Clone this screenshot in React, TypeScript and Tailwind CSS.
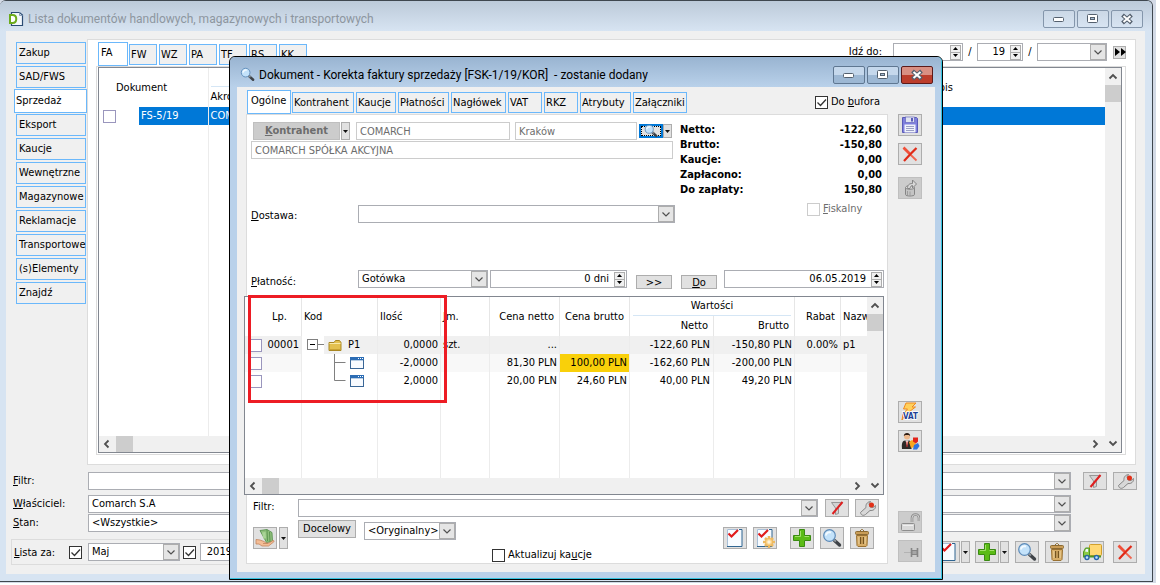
import type { ReactNode } from 'react';
import { useId } from 'react';

interface ChildrenProps {
  children: ReactNode;
}

interface IconButtonProps extends ChildrenProps {
  label: string;
  disabled?: boolean;
  short?: boolean;
}

interface SelectBoxProps {
  id?: string;
  label?: string;
  value?: string;
  className: string;
}

interface CheckBoxProps {
  id?: string;
  label?: string;
  checked?: boolean;
  tone?: 'dark' | 'muted' | 'violet';
  disabled?: boolean;
}

interface LineItem {
  lp?: string;
  quantity: string;
  unit?: string;
  netPrice: string;
  grossPrice?: string;
  net: string;
  gross: string;
  discount?: string;
  name?: string;
}

const documentGroups = [
  'Zakup',
  'SAD/FWS',
  'Sprzedaż',
  'Eksport',
  'Kaucje',
  'Wewnętrzne',
  'Magazynowe',
  'Reklamacje',
  'Transportowe',
  '(s)Elementy',
  'Znajdź',
];

const listTabs = ['FW', 'WZ', 'PA', 'TF', 'RS', 'KK'];

const documentTabs = [
  { name: 'Kontrahent', width: 'w-[62px]' },
  { name: 'Kaucje', width: 'w-[40px]' },
  { name: 'Płatności', width: 'w-[51px]' },
  { name: 'Nagłówek', width: 'w-[55px]' },
  { name: 'VAT', width: 'w-[34px]' },
  { name: 'RKZ', width: 'w-[34px]' },
  { name: 'Atrybuty', width: 'w-[51px]' },
  { name: 'Załączniki', width: 'w-[54px]' },
];

const totals = [
  ['Netto:', '-122,60'],
  ['Brutto:', '-150,80'],
  ['Kaucje:', '0,00'],
  ['Zapłacono:', '0,00'],
  ['Do zapłaty:', '150,80'],
];

const items: LineItem[] = [
  {
    lp: '00001',
    quantity: '0,0000',
    unit: 'szt.',
    netPrice: '...',
    net: '-122,60 PLN',
    gross: '-150,80 PLN',
    discount: '0.00%',
    name: 'p1',
  },
  {
    quantity: '-2,0000',
    netPrice: '81,30 PLN',
    grossPrice: '100,00 PLN',
    net: '-162,60 PLN',
    gross: '-200,00 PLN',
  },
  {
    quantity: '2,0000',
    netPrice: '20,00 PLN',
    grossPrice: '24,60 PLN',
    net: '40,00 PLN',
    gross: '49,20 PLN',
  },
];

/* ---------- icons ---------- */

function SearchIcon({ className = 'size-[20px]' }: { className?: string }) {
  return (
    <svg viewBox="0 0 20 20" className={className} aria-hidden="true">
      <path d="M12.5 12.5l5 4.500" stroke="#3f4348" strokeWidth="3.4" strokeLinecap="round" />
      <path d="M11.5 11.5l2.5 2" stroke="#8d949b" strokeWidth="2" />
      <circle cx="7.5" cy="7.5" r="5.8" fill="#c3e2fa" stroke="#5c8ab8" strokeWidth="1.2" />
      <path d="M4 7.500a3.5 3.5 0 0 1 5-3" stroke="#f3faff" strokeWidth="2" fill="none" />
    </svg>
  );
}

function PlusIcon() {
  return (
    <svg viewBox="0 0 20 20" className="size-[20px]" aria-hidden="true">
      <path d="M7.5 1.5h5v6h6v5h-6v6h-5v-6h-6v-5h6z" fill="#5bbb16" stroke="#3a8a12" />
      <path d="M8.500 3v5.500H3M12.500 8.500H17" stroke="#a3e06a" fill="none" />
    </svg>
  );
}

function TrashIcon() {
  return (
    <svg viewBox="0 0 20 20" className="size-[20px]" aria-hidden="true">
      <path d="M7.5 3.5l2-2h1l2 2" fill="none" stroke="#8b6a33" />
      <path d="M4.5 7.5h11l-.5 10-1 1H6l-1-1z" fill="#d8ae68" stroke="#9a7233" />
      <rect x="3.5" y="3.5" width="13" height="3" rx="1" fill="#c99d57" stroke="#8b6a33" />
      <path d="M8.5 9v7M11.5 9v7" stroke="#75541f" strokeWidth="1.5" />
      <path d="M7 9v7M13 9v7" stroke="#f0d7a4" />
    </svg>
  );
}

function CheckDocIcon({ gear = false }: { gear?: boolean }) {
  return (
    <svg viewBox="0 0 20 20" className="size-[20px]" aria-hidden="true">
      <path d="M2 1h15v18H2z" fill="#f7fbff" />
      <path d="M2.5 19V1.5H13" stroke="#a9bfd6" fill="none" />
      <path d="M14 1.5h3V18.500H2" stroke="#2f6591" fill="none" />
      <path d="M3.5 5.5l3 3L13 2" stroke="#e01b1b" strokeWidth="2.2" fill="none" />
      {gear && (
        <g>
          <path d="M14 8v12M8 14h12M10 10l8 8M18 10l-8 8" stroke="#eeb95f" strokeWidth="2.6" />
          <circle cx="14" cy="14" r="3.6" fill="#fbd58c" stroke="#eeb95f" />
          <circle cx="14" cy="14" r="1.7" fill="#fff4dc" />
        </g>
      )}
    </svg>
  );
}

function FilterIcon() {
  return (
    <svg viewBox="0 0 20 16" className="h-[16px] w-[20px] shrink-0" aria-hidden="true">
      <path d="M4.5 2.5h11l-4 5v6l-3 1V8z" fill="#d2d2d2" stroke="#979797" />
      <path d="M5.500 14L15.500 2" stroke="#df1f1f" strokeWidth="2" />
    </svg>
  );
}

function WrenchIcon() {
  return (
    <svg viewBox="0 0 20 16" className="h-[16px] w-[20px] shrink-0" aria-hidden="true">
      <path
        d="M3.500 12.500l5.500-5c-.5-3 1-5.500 4.500-6l-1.500 2.500 1 3 3 .5 2.500-2c.5 3.500-2.500 5.500-5.500 5l-4.500 4c-2 1.500-4.500 1-5-2z"
        fill="#d8d8d8"
        stroke="#858585"
      />
      <circle cx="14.500" cy="5" r="2.500" fill="#e23018" />
    </svg>
  );
}

function DeleteIcon() {
  return (
    <svg viewBox="0 0 20 20" className="size-[20px]" aria-hidden="true">
      <path d="M4 4.5l12.500 12" stroke="#f0654f" strokeWidth="1.8" />
      <path d="M3.5 3.5l6 6" stroke="#f0503a" strokeWidth="2.6" />
      <path d="M16.5 4L10 10.5 4 17" stroke="#e02a17" strokeWidth="2.2" fill="none" />
    </svg>
  );
}

function TruckIcon() {
  return (
    <svg viewBox="0 0 20 20" className="size-[20px]" aria-hidden="true">
      <rect x="7.5" y="2.5" width="12" height="11" rx="1" fill="#ffd873" stroke="#d19f2c" />
      <path d="M1.5 14.5V10l2-4h4v8.500z" fill="#8acb45" stroke="#4f9422" />
      <path d="M3 9.5l1-2.500h2v3z" fill="#eaf6ff" />
      <path d="M1 14.5h18" stroke="#4f9422" strokeWidth="2" />
      <circle cx="5" cy="15.5" r="2" fill="#bfe3ff" stroke="#2765a8" strokeWidth="1.4" />
      <circle cx="14.5" cy="15.5" r="2" fill="#bfe3ff" stroke="#2765a8" strokeWidth="1.4" />
    </svg>
  );
}

function SaveIcon() {
  return (
    <svg viewBox="0 0 20 20" className="size-[20px]" aria-hidden="true">
      <path d="M2.5 2.5h14l1 1v14h-15z" fill="#7f80dd" stroke="#5a5bb8" />
      <rect x="5.5" y="2" width="9" height="5.5" fill="#dfe3f0" stroke="#5a5bb8" strokeWidth=".6" />
      <rect x="11" y="3" width="2" height="3.5" fill="#5a5bb8" />
      <rect x="4.5" y="9.5" width="11" height="8" fill="#f1f3fb" />
      <path d="M6 11.5h8M6 13.5h8M6 15.5h8" stroke="#9a9fc4" />
    </svg>
  );
}

function CanIcon() {
  return (
    <svg viewBox="0 0 20 20" className="size-[20px]" aria-hidden="true">
      <path d="M5.5 9.5v7c0 2 9 2 9 0v-7" fill="#c4c4c4" stroke="#858585" />
      <ellipse cx="10" cy="9.5" rx="4.5" ry="1.8" fill="#dadada" stroke="#858585" />
      <path
        d="M7.500 10.5c0-3 1-5 5-5v-3.500l4 4-4 4V7.500c-1.500 0-2 1-2.500 3z"
        fill="#d8d8d8"
        stroke="#858585"
      />
      <path d="M7.500 13v4M10 13.500v4" stroke="#9c9c9c" />
    </svg>
  );
}

function VatIcon() {
  return (
    <svg viewBox="0 0 22 20" className="h-[20px] w-[22px] shrink-0" aria-hidden="true">
      <path d="M7 1h10l-4 4h3.500L6 13l-3 5 1-6 4.500-5H4.500z" fill="#ffd05c" stroke="#f08a1c" />
      <text
        x="4"
        y="17"
        fontSize="8"
        fontWeight="700"
        fontFamily="DejaVu Sans Condensed, sans-serif"
        fill="#1e3f95"
        stroke="#fff"
        strokeWidth="1.5"
        paintOrder="stroke"
      >
        VAT
      </text>
    </svg>
  );
}

function CustomerIcon() {
  return (
    <svg viewBox="0 0 20 20" className="size-[20px]" aria-hidden="true">
      <path d="M2 18c-.5-5 0-8 3-8.500h4c2.500.5 3 4 2.500 8.500z" fill="#2d2a28" />
      <path d="M5.5 9.5L7 15l1.500-5.500z" fill="#f5f5f5" />
      <path d="M7 10.5V16" stroke="#d22" />
      <circle cx="7" cy="5.5" r="3" fill="#eeb98d" />
      <path d="M3.8 5c0-4 6.400-4 6.400 0l-1.500-1H5.500z" fill="#2b1a12" />
      <path d="M9 11l3-2 4 2-1 5-4 1z" fill="#f9a61f" />
      <path d="M13 6.5h5v4l-2 2-3-2z" fill="#e2231a" />
      <path d="M14 14l4-2 1.500 3-2.500 3.500h-4z" fill="#2f73dd" />
    </svg>
  );
}

function LockIcon() {
  return (
    <svg viewBox="0 0 20 20" className="size-[20px]" aria-hidden="true">
      <path d="M12 10V6a3.500 3.500 0 0 1 7 0v3" stroke="#8d8d8d" strokeWidth="2.6" fill="none" />
      <path d="M12 10V6a3.500 3.500 0 0 1 7 0v3" stroke="#d0d0d0" fill="none" />
      <rect x="1.5" y="11.5" width="13" height="7" rx="1" fill="#d9d9d9" stroke="#8d8d8d" />
      <path d="M3 13.5h10" stroke="#efefef" />
    </svg>
  );
}

function PinIcon() {
  return (
    <svg viewBox="0 0 20 20" className="size-[20px]" aria-hidden="true">
      <path d="M4 11.5h7" stroke="#b3b3b3" />
      <path d="M11.5 7v9M17.500 7v9" stroke="#858585" strokeWidth="1.600" />
      <path d="M12 9.500h5v4h-5z" fill="#a6a6a6" stroke="#858585" />
    </svg>
  );
}

function MoneyIcon() {
  return (
    <svg viewBox="0 0 20 20" className="size-[20px]" aria-hidden="true">
      <path d="M5 2.5l7-1 5 3 .5 9-6 1z" fill="#8fbf7b" stroke="#4f8a46" strokeWidth=".8" />
      <path d="M12 2l.5 11M14.5 4l.5 9.500" stroke="#4f8a46" strokeWidth=".8" />
      <path d="M7 4.5l3.500-.5.5 6-2.500 1z" fill="#aad497" />
      <path
        d="M1 11.5l4 .5 4 1.500 2 1.500h3l4-2.500c1.500 0 1.500 1 0 2L13.500 18H7l-3-2H1z"
        fill="#f4bd96"
        stroke="#c3855d"
        strokeWidth=".8"
      />
      <path d="M8 15.5h5" stroke="#c3855d" strokeWidth=".8" />
    </svg>
  );
}

function AppIcon() {
  return (
    <svg viewBox="0 0 16 16" className="size-[16px]" aria-hidden="true">
      <path d="M3.500 3.500v-2h8L14.500 4v10.500h-11v-2" fill="#f4f8fc" stroke="#2c4c74" strokeWidth="1.2" />
      <path d="M11.500 1.500V4.500h3" stroke="#8aa0bb" fill="none" />
      <path d="M2 4h2.500c5 0 5 8 0 8H2z" fill="#fff" stroke="#6cab1c" strokeWidth="2" />
    </svg>
  );
}

function FolderIcon() {
  return (
    <svg viewBox="0 0 14 13" className="h-[13px] w-[14px]" aria-hidden="true">
      <path d="M1 3.5h5l1.500-2h4l1.500 2v8H1z" fill="#e3c04e" stroke="#a98722" />
      <path d="M1.5 4.5h11" stroke="#f8e9a8" />
      <path d="M1.5 10.5h11" stroke="#c9a232" />
    </svg>
  );
}

function VariantIcon() {
  return (
    <svg viewBox="0 0 14 12" className="h-[12px] w-[14px]" aria-hidden="true">
      <rect x=".5" y=".5" width="13" height="11" fill="#f8fbff" stroke="#3a6797" />
      <path d="M0 0h14v3H0z" fill="#2c6db5" />
      <path d="M8 1.5h1M10 1.5h1M12 1.5h1" stroke="#fff" />
      <path d="M1 3.500h12" stroke="#b7cde4" />
    </svg>
  );
}

function Chevron({
  direction = 'down',
  thin = false,
}: {
  direction?: 'up' | 'down' | 'left' | 'right';
  thin?: boolean;
}) {
  const paths = {
    up: 'M1.5 6.5L5 3l3.500 3.500',
    down: 'M1.5 3.500L5 7l3.500-3.500',
    left: 'M6.5 1.5L3 5l3.500 3.500',
    right: 'M3.5 1.5L7 5 3.500 8.500',
  };

  return (
    <svg viewBox="0 0 10 10" className="size-[10px] shrink-0" aria-hidden="true">
      <path d={paths[direction]} stroke="#505050" strokeWidth={thin ? 1.2 : 1.8} fill="none" />
    </svg>
  );
}

/* ---------- controls ---------- */

function IconButton({ label, disabled = false, short = false, children }: IconButtonProps) {
  return (
    <button
      type="button"
      aria-label={label}
      disabled={disabled}
      className={`flex w-[24px] shrink-0 items-center justify-center border ${
        short ? 'h-[18px]' : 'h-[22px]'
      } ${disabled ? 'border-[#bfbfbf] bg-[#cccccc]' : 'border-[#adadad] bg-[#e1e1e1]'}`}
    >
      {children}
    </button>
  );
}

function DropButton({ label, className = 'h-[22px]' }: { label: string; className?: string }) {
  return (
    <button
      type="button"
      aria-label={label}
      className={`flex w-[9px] shrink-0 items-center justify-center border border-[#adadad] bg-[#e1e1e1] ${className}`}
    >
      <svg viewBox="0 0 5 3" className="h-[3px] w-[5px] shrink-0" aria-hidden="true">
        <path d="M0 0h5L2.5 3z" fill="#111" />
      </svg>
    </button>
  );
}

function SelectBox({ id, label, value = '', className }: SelectBoxProps) {
  return (
    <div className={`flex h-[18px] border border-[#abadb3] bg-white ${className}`}>
      <select
        id={id}
        aria-label={label}
        defaultValue={value}
        className="min-w-0 flex-1 appearance-none bg-transparent pl-[3px] outline-none"
      >
        <option value={value}>{value}</option>
      </select>
      <span className="pointer-events-none flex w-[16px] items-center justify-center border border-[#adadad] bg-[#e5e5e5]">
        <Chevron thin />
      </span>
    </div>
  );
}

function SpinBox({ id, label, value = '', className }: SelectBoxProps) {
  return (
    <div className={`flex h-[18px] items-center border border-[#abadb3] bg-white pr-px ${className}`}>
      <input
        id={id}
        type="text"
        aria-label={label}
        defaultValue={value}
        className="min-w-0 flex-1 bg-transparent pr-[5px] text-right outline-none"
      />
      <span className="flex h-[15px] w-[11px] flex-col border border-[#adadad] bg-[#f0f0f0]">
        <button type="button" aria-label="Zwiększ" className="flex flex-1 items-center justify-center">
          <svg viewBox="0 0 5 3" className="h-[3px] w-[5px] shrink-0" aria-hidden="true">
            <path d="M0 3h5L2.5 0z" fill="#000" />
          </svg>
        </button>
        <button
          type="button"
          aria-label="Zmniejsz"
          className="flex flex-1 items-center justify-center border-t border-[#adadad]"
        >
          <svg viewBox="0 0 5 3" className="h-[3px] w-[5px] shrink-0" aria-hidden="true">
            <path d="M0 0h5L2.5 3z" fill="#000" />
          </svg>
        </button>
      </span>
    </div>
  );
}

function CheckBox({ id, label, checked = false, tone = 'dark', disabled = false }: CheckBoxProps) {
  const border = {
    dark: 'border-[#333333]',
    muted: 'border-[#cccccc]',
    violet: 'border-[#9a96bd]',
  };

  return (
    <span className="grid size-[13px] shrink-0">
      <input
        id={id}
        type="checkbox"
        aria-label={label}
        defaultChecked={checked}
        disabled={disabled}
        className={`peer col-start-1 row-start-1 size-[13px] appearance-none border bg-white ${border[tone]}`}
      />
      <svg
        viewBox="0 0 13 13"
        className="pointer-events-none invisible col-start-1 row-start-1 size-[13px] peer-checked:visible"
        aria-hidden="true"
      >
        <path d="M2.5 6.5l3 3L11 3.5" stroke="#333" strokeWidth="1.3" fill="none" />
      </svg>
    </span>
  );
}

function WindowButtons({ active = false }: { active?: boolean }) {
  const base = 'flex h-[18px] w-[32px] items-center justify-center rounded-[2px] border';
  const plain = active
    ? 'border-[#5f7791] bg-linear-to-b from-[#c5d8ec] from-50% to-[#9db8d4] to-50%'
    : 'border-[#8496ab] bg-linear-to-b from-[#cbd8e6] to-[#d7e4f2]';
  const close = active
    ? 'border-[#5c1a1a] bg-linear-to-b from-[#d98f83] from-50% to-[#bc3d2c] to-50%'
    : plain;

  return (
    <div className="flex gap-[2px]">
      <button type="button" aria-label="Minimalizuj" className={`${base} ${plain}`}>
        <svg viewBox="0 0 12 12" className="size-[12px]" aria-hidden="true">
          <rect x=".5" y="4.5" width="10" height="4" rx="1" fill="#fff" stroke="#54606e" />
        </svg>
      </button>
      <button type="button" aria-label="Maksymalizuj" className={`${base} ${plain}`}>
        <svg viewBox="0 0 12 12" className="size-[12px]" aria-hidden="true">
          <rect x=".5" y="1.5" width="10" height="8" rx="1" fill="#fff" stroke="#54606e" />
          <rect x="3.5" y="4.5" width="4" height="2" fill="#a8bdd4" stroke="#54606e" />
        </svg>
      </button>
      <button type="button" aria-label="Zamknij" className={`${base} ${close}`}>
        <svg viewBox="0 0 12 12" className="size-[12px]" aria-hidden="true">
          <path d="M1.500 2l9 8M10.500 2l-9 8" stroke="#54606e" strokeWidth="4" />
          <path d="M2.500 3l7 6M9.500 3l-7 6" stroke="#fff" strokeWidth="2" />
        </svg>
      </button>
    </div>
  );
}

function Tab({ children, width }: ChildrenProps & { width: string }) {
  return (
    <button
      type="button"
      role="tab"
      aria-selected={false}
      className={`h-[21px] overflow-hidden border border-[#6bb8fb] bg-[#f0f0f0] pl-px text-left whitespace-nowrap ${width}`}
    >
      {children}
    </button>
  );
}

function HorizontalScroll() {
  return (
    <div className="flex h-[16px] items-center bg-[#f0f0f0] pr-[5px] pl-[3px]">
      <Chevron direction="left" />
      <span className="ml-[4px] h-full w-[17px] bg-[#cdcdcd]" />
      <span className="flex-1" />
      <Chevron direction="right" />
    </div>
  );
}

function VerticalScroll() {
  return (
    <div className="flex w-[16px] shrink-0 flex-col items-center bg-[#f0f0f0] pt-[4px] pb-[4px]">
      <Chevron direction="up" />
      <span className="mt-[3px] h-[17px] w-full bg-[#cdcdcd]" />
      <span className="flex-1" />
      <Chevron />
    </div>
  );
}

/* ---------- document list ---------- */

function DocumentList() {
  return (
    <div className="ml-[8px] flex flex-1 flex-col border border-[#dcdcdc] pr-[3px] pb-px pl-px">
      <div className="flex flex-1 border border-[#828790] bg-white">
        <div className="flex min-w-0 flex-1 flex-col">
          <div className="flex flex-1">
            <table className="w-full flex-1 table-fixed border-collapse text-left">
              <colgroup>
                <col className="w-[40px]" />
                <col className="w-[69px]" />
                <col className="w-[723px]" />
                <col />
              </colgroup>
              <thead>
                <tr className="h-[39px]">
                  <th colSpan={2} className="border-r border-[#ececec] pl-[17px] font-normal">
                    Dokument
                  </th>
                  <th className="p-0 align-bottom font-normal">
                    <div className="ml-[2px] border-t border-[#d5e6f5] pt-[3px] pb-[3px]">Akronim</div>
                  </th>
                  <th className="pl-0 font-normal">Opis</th>
                </tr>
              </thead>
              <tbody>
                <tr className="h-[18px]">
                  <td className="p-0 pl-[4px]">
                    <CheckBox tone="violet" label="Zaznacz FS-5/19" />
                  </td>
                  <td className="border-r border-[#ececec] bg-[#0078d7] p-0 pl-[2px] text-white">FS-5/19</td>
                  <td className="bg-[#0078d7] p-0 pl-[2px] text-white">COMARCH</td>
                  <td className="bg-[#0078d7] p-0" />
                </tr>
                <tr>
                  <td colSpan={2} className="h-full border-r border-[#ececec]" />
                  <td colSpan={2} />
                </tr>
              </tbody>
            </table>
          </div>
          <HorizontalScroll />
        </div>
        <VerticalScroll />
      </div>
    </div>
  );
}

function ListFooter() {
  const filterId = useId();
  const ownerId = useId();
  const stateId = useId();
  const monthId = useId();

  return (
    <div className="mt-[7px] pr-[8px] pl-[5px]">
      <div className="mb-[5px] flex items-center">
        <label htmlFor={filterId} className="w-[77px] pl-[2px]">
          <u>F</u>iltr:
        </label>
        <SelectBox id={filterId} className="flex-1" />
        <div className="ml-[12px] flex gap-[6px]">
          <IconButton label="Wyczyść filtr" short>
            <FilterIcon />
          </IconButton>
          <IconButton label="Konstruktor filtra" short>
            <WrenchIcon />
          </IconButton>
        </div>
      </div>
      <div className="mb-px flex items-center pr-[66px]">
        <label htmlFor={ownerId} className="w-[77px] pl-[2px]">
          <u>W</u>łaściciel:
        </label>
        <SelectBox id={ownerId} value="Comarch S.A" className="flex-1" />
      </div>
      <div className="flex items-center pr-[66px]">
        <label htmlFor={stateId} className="w-[77px] pl-[2px]">
          <u>S</u>tan:
        </label>
        <SelectBox id={stateId} value="<Wszystkie>" className="flex-1" />
      </div>

      <div className="mt-[7px] mb-[9px] flex items-center justify-between">
        <div className="flex h-[26px] w-[300px] items-center border border-[#dcdcdc]">
          <label htmlFor={monthId} className="w-[57px] pt-px pl-[2px]">
            <u>L</u>ista za:
          </label>
          <CheckBox checked label="Filtruj po miesiącu" />
          <SelectBox id={monthId} value="Maj" className="mr-[3px] ml-[6px] w-[92px]" />
          <CheckBox checked label="Filtruj po roku" />
          <SpinBox label="Rok" value="2019" className="ml-[4px] w-[50px]" />
        </div>
        <div className="flex items-center">
          <IconButton label="Podgląd statusu">
            <CheckDocIcon />
          </IconButton>
          <span className="mr-[5px] ml-px flex">
            <DropButton label="Więcej statusów" />
          </span>
          <IconButton label="Dodaj">
            <PlusIcon />
          </IconButton>
          <span className="mr-[6px] ml-px flex">
            <DropButton label="Więcej opcji dodawania" />
          </span>
          <div className="flex gap-[6px]">
            <IconButton label="Pokaż">
              <SearchIcon />
            </IconButton>
            <IconButton label="Usuń">
              <TrashIcon />
            </IconButton>
          </div>
          <div className="ml-[11px] flex gap-[9px]">
            <IconButton label="Transport">
              <TruckIcon />
            </IconButton>
            <IconButton label="Zamknij listę">
              <DeleteIcon />
            </IconButton>
          </div>
        </div>
      </div>
    </div>
  );
}

/* ---------- correction document ---------- */

function TreeCell({ index }: { index: number }) {
  if (index === 0) {
    return (
      <div className="flex h-[18px] items-center">
        <svg viewBox="0 0 22 18" className="h-[18px] w-[22px] shrink-0" aria-hidden="true">
          <rect x="5.5" y="3.5" width="10" height="10" fill="#fff" stroke="#808080" />
          <path d="M8 8.5h5" stroke="#000" />
          <path d="M16 8.5h6" stroke="#808080" />
        </svg>
        <div className="flex h-[18px] flex-1 items-center gap-[6px] bg-[#f0f0f0] pl-[4px]">
          <FolderIcon />
          P1
        </div>
      </div>
    );
  }

  return (
    <div className="flex h-[18px] items-center bg-white">
      <svg viewBox="0 0 48 18" className="h-[18px] w-[48px] shrink-0" aria-hidden="true">
        <path d={index === 1 ? 'M32.5 0v18M32.5 8.5h11' : 'M32.5 0v8.5h11'} stroke="#808080" fill="none" />
      </svg>
      <VariantIcon />
    </div>
  );
}

function ItemsTable() {
  const head = 'overflow-hidden border-r border-[#e6e6e6] p-0 font-normal whitespace-nowrap';
  const cell = 'overflow-hidden border-r border-[#ececec] p-0 whitespace-nowrap';
  const rowColors = ['bg-[#f0f0f0]', 'bg-[#f8f8f8]', 'bg-white'];

  return (
    <div className="relative mr-[3px] -ml-[3px]">
      <div className="flex border border-[#828790] bg-white">
        <div className="min-w-0 flex-1">
          <table className="w-full table-fixed border-separate border-spacing-0">
            <colgroup>
              <col className="w-[57px]" />
              <col className="w-[76px]" />
              <col className="w-[63px]" />
              <col className="w-[49px]" />
              <col className="w-[70px]" />
              <col className="w-[70px]" />
              <col className="w-[84px]" />
              <col className="w-[81px]" />
              <col className="w-[46px]" />
              <col />
            </colgroup>
            <thead>
              <tr className="h-[19px]">
                <th rowSpan={2} className={`${head} pr-[14px] text-right`}>
                  Lp.
                </th>
                <th rowSpan={2} className={`${head} pl-[2px] text-left`}>
                  Kod
                </th>
                <th rowSpan={2} className={`${head} pl-[2px] text-left`}>
                  Ilość
                </th>
                <th rowSpan={2} className={`${head} pl-[2px] text-left`}>
                  Jm.
                </th>
                <th rowSpan={2} className={`${head} pr-[5px] text-right`}>
                  Cena netto
                </th>
                <th rowSpan={2} className={`${head} pr-[5px] text-right`}>
                  Cena brutto
                </th>
                <th colSpan={2} className={head}>
                  <div className="mx-[3px] border-b border-[#d5e6f5] leading-[18px]">Wartości</div>
                </th>
                <th rowSpan={2} className={`${head} pr-[5px] text-right`}>
                  Rabat
                </th>
                <th rowSpan={2} className="overflow-hidden p-0 pl-[2px] text-left font-normal">
                  Nazwa
                </th>
              </tr>
              <tr className="h-[20px]">
                <th className={`${head} pr-[5px] text-right`}>Netto</th>
                <th className={`${head} pr-[5px] text-right`}>Brutto</th>
              </tr>
            </thead>
            <tbody>
              {items.map((item, index) => (
                <tr key={item.quantity} className={`h-[18px] text-right ${rowColors[index]}`}>
                  <td className={`${cell} pl-[4px]`}>
                    <div className="flex items-center justify-between pr-[2px]">
                      <CheckBox tone="violet" label={`Zaznacz pozycję ${index + 1}`} />
                      {item.lp}
                    </div>
                  </td>
                  <td className={`${cell} bg-white`}>
                    <TreeCell index={index} />
                  </td>
                  <td className={`${cell} pr-[2px]`}>{item.quantity}</td>
                  <td className={`${cell} pl-[2px] text-left`}>{item.unit}</td>
                  <td className={`${cell} pr-[2px]`}>{item.netPrice}</td>
                  <td className={`${cell} pr-[2px] ${index === 1 ? 'bg-[#f9d00a]' : ''}`}>{item.grossPrice}</td>
                  <td className={`${cell} pr-[3px]`}>{item.net}</td>
                  <td className={`${cell} pr-[2px]`}>{item.gross}</td>
                  <td className={`${cell} pr-[2px]`}>{item.discount}</td>
                  <td className="overflow-hidden p-0 pl-[2px] text-left">{item.name}</td>
                </tr>
              ))}
              <tr className="h-[88px]">
                {['lp', 'code', 'qty', 'unit', 'netp', 'grossp', 'net', 'gross', 'disc'].map((column) => (
                  <td key={column} className={cell} />
                ))}
                <td />
              </tr>
            </tbody>
          </table>
          <HorizontalScroll />
        </div>
        <VerticalScroll />
      </div>
      {/* correction lines marked for the reader */}
      <div className="pointer-events-none absolute -top-px left-[4px] h-[108px] w-[199px] border-3 border-[#ed1c24]" />
    </div>
  );
}

function CustomerBlock() {
  return (
    <div className="flex justify-between pr-[5px] pl-[4px]">
      <div className="w-[422px]">
        <div className="flex items-center pl-[2px]">
          <button
            type="button"
            disabled
            className="h-[18px] w-[87px] border border-[#bfbfbf] bg-[#cccccc] font-bold text-[#6d6d6d]"
          >
            <u>K</u>ontrahent
          </button>
          <span className="mr-[6px] ml-px flex">
            <DropButton label="Wybierz kontrahenta" className="h-[18px]" />
          </span>
          <input
            type="text"
            aria-label="Akronim kontrahenta"
            defaultValue="COMARCH"
            className="h-[18px] w-[154px] border border-[#cccccc] px-[3px] text-[#6d6d6d]"
          />
          <input
            type="text"
            aria-label="Miasto"
            defaultValue="Kraków"
            className="ml-[5px] h-[18px] w-[122px] border border-[#cccccc] px-[3px] text-[#6d6d6d]"
          />
          <button
            type="button"
            aria-label="Karta kontrahenta"
            className="ml-[2px] flex h-[14px] w-[24px] items-center justify-center bg-[#0078d7] p-[2px]"
          >
            <span className="flex h-full w-full items-center justify-center border border-dotted border-black bg-[#e1e1e1]">
              <SearchIcon className="size-[14px] shrink-0" />
            </span>
          </button>
          <DropButton label="Więcej o kontrahencie" className="h-[14px]" />
        </div>
        <input
          type="text"
          aria-label="Nazwa kontrahenta"
          defaultValue="COMARCH SPÓŁKA AKCYJNA"
          className="mt-px block h-[18px] w-full border border-[#cccccc] px-[3px] text-[#6d6d6d]"
        />
      </div>
      <dl className="w-[202px] font-bold">
        {totals.map(([name, amount]) => (
          <div key={name} className="flex justify-between leading-[15px]">
            <dt>{name}</dt>
            <dd>{amount}</dd>
          </div>
        ))}
      </dl>
    </div>
  );
}

function DocumentDialog() {
  const bufferId = useId();
  const deliveryId = useId();
  const fiscalId = useId();
  const paymentId = useId();
  const filterId = useId();
  const depositId = useId();

  return (
    <section
      role="dialog"
      aria-label="Korekta faktury sprzedaży"
      className="absolute top-[56px] left-[229px] w-[714px] rounded-t-[6px] border border-black bg-[#b9d1ea]"
    >
      <div className="rounded-t-[5px] border-r border-b border-[#35c3e0] pb-[6px]">
        <header className="flex h-[30px] items-center justify-between rounded-t-[5px] bg-linear-to-b from-[#99b4d1] to-[#b9d1ea] pt-[6px] pr-[8px] pb-px pl-[10px]">
          <h2 className="flex items-center gap-[4px] font-[Roboto,sans-serif] text-[12px] whitespace-pre">
            <SearchIcon className="size-[15px]" />
            {'Dokument - Korekta faktury sprzedaży [FSK-1/19/KOR]  - zostanie dodany'}
          </h2>
          <WindowButtons active />
        </header>

        <div className="mr-[6px] ml-[7px] flex bg-[#f0f0f0] pb-[8px]">
          <div className="ml-[9px] w-[642px] shrink-0">
            <div className="flex h-[27px] items-end justify-between pr-[8px] pl-px">
              <div role="tablist" className="flex items-end gap-[2px] pb-px">
                <button
                  type="button"
                  role="tab"
                  aria-selected="true"
                  className="-mr-px -mb-px h-[24px] w-[44px] border border-[#6bb8fb] bg-white pb-[3px] pl-[3px] text-left"
                >
                  Ogólne
                </button>
                {documentTabs.map((tab) => (
                  <Tab key={tab.name} width={tab.width}>
                    {tab.name}
                  </Tab>
                ))}
              </div>
              <div className="flex items-center gap-[3px] pb-[5px]">
                <CheckBox id={bufferId} checked />
                <label htmlFor={bufferId}>
                  Do <u>b</u>ufora
                </label>
              </div>
            </div>

            <div className="border border-[#dcdcdc] bg-white pt-[7px]">
              <CustomerBlock />

              <div className="mt-[5px] flex items-start pl-[4px]">
                <label htmlFor={deliveryId} className="w-[107px] pt-[7px]">
                  <u>D</u>ostawa:
                </label>
                <SelectBox id={deliveryId} className="mt-[3px] w-[317px]" />
                <div className="ml-[132px] flex items-center gap-[3px] text-[#6d6d6d]">
                  <CheckBox id={fiscalId} tone="muted" disabled />
                  <label htmlFor={fiscalId}>
                    <u>F</u>iskalny
                  </label>
                </div>
              </div>

              <div className="mt-[47px] flex items-start pr-[3px] pb-[7px] pl-[4px]">
                <label htmlFor={paymentId} className="w-[107px] pt-[5px]">
                  <u>P</u>łatność:
                </label>
                <SelectBox id={paymentId} value="Gotówka" className="w-[130px]" />
                <SpinBox label="Termin płatności" value="0 dni" className="ml-[2px] w-[137px]" />
                <div className="mt-[5px] ml-[9px] flex gap-[9px]">
                  <button
                    type="button"
                    className="h-[14px] w-[36px] border border-[#adadad] bg-[#e1e1e1] leading-[14px]"
                  >
                    &gt;&gt;
                  </button>
                  <button
                    type="button"
                    className="h-[14px] w-[36px] border border-[#adadad] bg-[#e1e1e1] leading-[14px]"
                  >
                    <u>D</u>o
                  </button>
                </div>
                <SpinBox label="Data płatności" value="06.05.2019" className="ml-[7px] flex-1" />
              </div>

              <ItemsTable />

              <div className="mt-[4px] flex items-start pr-[8px] pl-[6px]">
                <label htmlFor={filterId} className="w-[45px] pt-px">
                  Filtr:
                </label>
                <SelectBox id={filterId} className="flex-1" />
                <div className="ml-[7px] flex gap-[6px]">
                  <IconButton label="Wyczyść filtr pozycji" short>
                    <FilterIcon />
                  </IconButton>
                  <IconButton label="Konstruktor filtra pozycji" short>
                    <WrenchIcon />
                  </IconButton>
                </div>
              </div>

              <div className="flex h-[46px] items-start pt-[3px] pr-[13px] pl-[6px]">
                <div className="mt-[7px] flex w-[45px] gap-[2px]">
                  <IconButton label="Płatności">
                    <MoneyIcon />
                  </IconButton>
                  <DropButton label="Więcej płatności" />
                </div>
                <button type="button" className="h-[18px] w-[58px] border border-[#adadad] bg-[#e1e1e1]">
                  Docelowy
                </button>
                <SelectBox label="Widok cen" value="<Oryginalny>" className="mt-[2px] ml-[8px] w-[92px]" />
                <div className="mt-[28px] ml-[36px] flex items-center gap-[3px]">
                  <CheckBox id={depositId} />
                  <label htmlFor={depositId}>
                    Aktualizuj ka<u>u</u>cje
                  </label>
                </div>
                <div className="mt-[7px] ml-auto flex gap-[6px]">
                  <IconButton label="Zaznacz">
                    <CheckDocIcon />
                  </IconButton>
                  <IconButton label="Ustawienia zaznaczania">
                    <CheckDocIcon gear />
                  </IconButton>
                  <div className="ml-[7px] flex gap-[6px]">
                    <IconButton label="Dodaj pozycję">
                      <PlusIcon />
                    </IconButton>
                    <IconButton label="Pokaż pozycję">
                      <SearchIcon />
                    </IconButton>
                    <IconButton label="Usuń pozycję">
                      <TrashIcon />
                    </IconButton>
                  </div>
                </div>
              </div>
            </div>
          </div>

          <aside className="ml-[10px] flex flex-col justify-between pt-[27px] pb-[2px]">
            <div>
              <div className="mb-[12px] flex flex-col gap-[7px]">
                <IconButton label="Zapisz">
                  <SaveIcon />
                </IconButton>
                <IconButton label="Anuluj">
                  <DeleteIcon />
                </IconButton>
              </div>
              <IconButton label="Cofnij" disabled>
                <CanIcon />
              </IconButton>
            </div>
            <div className="flex flex-col gap-[7px]">
              <IconButton label="Przelicz VAT">
                <VatIcon />
              </IconButton>
              <IconButton label="Kontrahent docelowy">
                <CustomerIcon />
              </IconButton>
              <div className="mt-[52px] flex flex-col gap-[7px]">
                <IconButton label="Odblokuj" disabled>
                  <LockIcon />
                </IconButton>
                <IconButton label="Przypnij" disabled>
                  <PinIcon />
                </IconButton>
              </div>
            </div>
          </aside>
        </div>
      </div>
    </section>
  );
}

export default function App() {
  return (
    <div className="relative flex min-h-screen bg-white pr-[4px] pb-[2px] font-['DejaVu_Sans_Condensed','DejaVu_Sans',sans-serif] text-[11px] leading-[14px] text-black">
      <div className="flex flex-1 bg-[#d3dae6] pr-[3px] pb-px">
        <main className="flex flex-1 flex-col rounded-t-[6px] border-t border-r border-b border-[#3f474f] bg-[#d7e4f2] pr-[7px] pb-[7px]">
          <header className="-mr-[7px] flex h-[30px] items-center justify-between rounded-t-[5px] bg-linear-to-b from-[#bccad9] to-[#d7e4f2] pt-[6px] pr-[9px] pl-[8px]">
            <h1 className="flex items-center gap-[4px] font-[Roboto,sans-serif] text-[12px] text-[#8d969f]">
              <AppIcon />
              Lista dokumentów handlowych, magazynowych i transportowych
            </h1>
            <WindowButtons />
          </header>

          <div className="ml-[6px] flex flex-1 flex-col bg-[#f0f0f0]">
            <div className="flex flex-1 pr-[9px] pl-[8px]">
              <nav className="flex w-[73px] shrink-0 flex-col pt-[10px]">
                {documentGroups.map((group) => (
                  <button
                    key={group}
                    type="button"
                    className={
                      group === 'Sprzedaż'
                        ? 'h-[24px] border border-[#6bb8fb] bg-white pl-px text-left'
                        : 'my-px mr-px ml-[2px] h-[22px] border border-[#6bb8fb] pl-[2px] text-left whitespace-nowrap'
                    }
                  >
                    {group}
                  </button>
                ))}
              </nav>

              <div className="mt-[8px] flex min-w-0 flex-1 flex-col border border-[#dcdcdc] bg-white pr-[9px] pb-[9px]">
                <div className="flex h-[26px] items-end justify-between pl-[10px]">
                  <div role="tablist" className="flex items-end gap-[2px] pb-px">
                    <button
                      type="button"
                      role="tab"
                      aria-selected="true"
                      className="-mr-px -mb-px h-[24px] w-[30px] border border-[#6bb8fb] bg-white pb-[3px] pl-[2px] text-left"
                    >
                      FA
                    </button>
                    {listTabs.map((tab) => (
                      <Tab key={tab} width="w-[28px]">
                        {tab}
                      </Tab>
                    ))}
                  </div>
                  <div className="flex items-center pb-[5px]">
                    <span className="mr-[11px]">Idź do:</span>
                    <SpinBox label="Numer dokumentu" className="w-[70px]" />
                    <span className="w-[14px] text-center">/</span>
                    <SpinBox label="Rok dokumentu" value="19" className="w-[46px]" />
                    <span className="w-[14px] text-center">/</span>
                    <SelectBox label="Seria dokumentu" className="w-[70px]" />
                    <button
                      type="button"
                      aria-label="Przejdź"
                      className="ml-[6px] flex size-[13px] items-center justify-center border border-[#adadad] bg-[#e1e1e1]"
                    >
                      <svg viewBox="0 0 12 8" className="h-[8px] w-[12px] shrink-0" aria-hidden="true">
                        <path d="M1 0v8l5-4zM7 0v8l5-4z" fill="#000" />
                      </svg>
                    </button>
                  </div>
                </div>
                <DocumentList />
              </div>
            </div>
            <ListFooter />
          </div>
        </main>
      </div>
      <DocumentDialog />
    </div>
  );
}
